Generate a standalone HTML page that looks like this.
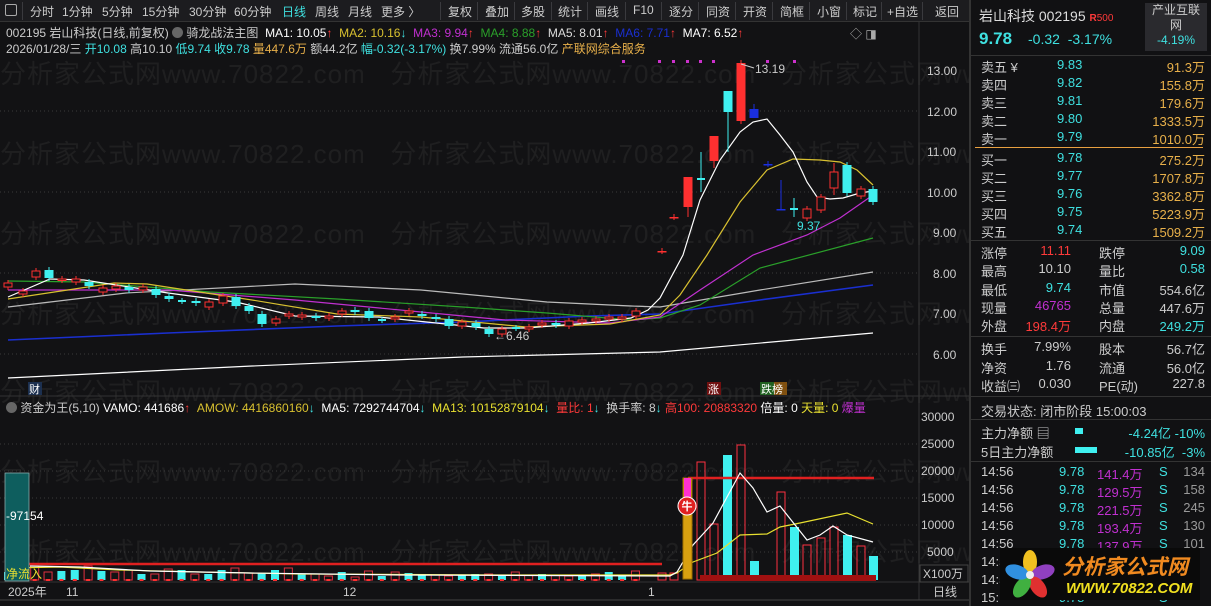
<!DOCTYPE html><html><head><meta charset="utf-8"><style>
*{margin:0;padding:0;box-sizing:border-box}
body{width:1211px;height:606px;background:#121214;font-family:"Liberation Sans","Noto Sans CJK SC",sans-serif;font-size:12px;color:#ccc;position:relative;overflow:hidden}
.a{position:absolute;white-space:nowrap}
#tb{position:absolute;left:0;top:0;width:970px;height:22px;background:#1c1c1f;border-bottom:1px solid #333}
#tb span{position:absolute;top:3px;font-size:12px;color:#ccc}
#tb i{position:absolute;top:2px;width:1px;height:18px;background:#3a3a3e}
#rp{position:absolute;left:969px;top:0;width:242px;height:606px;background:#111113;border-left:2px solid #333}
.r{position:absolute;font-size:13px;white-space:nowrap}
.c{color:#3fe0e0}.rd{color:#ff3a3a}.y{color:#e8b04a}.m{color:#c030d0}.w{color:#ccc}
.wm{position:absolute;font-size:26px;color:rgba(255,255,255,0.055);white-space:nowrap;letter-spacing:1px}
</style></head><body>
<div class="wm" style="left:0;top:54px">分析家公式网www.70822.com &nbsp; 分析家公式网www.70822.com &nbsp; 分析家公式网www.70822.com</div>
<div class="wm" style="left:0;top:134px">分析家公式网www.70822.com &nbsp; 分析家公式网www.70822.com &nbsp; 分析家公式网www.70822.com</div>
<div class="wm" style="left:0;top:214px">分析家公式网www.70822.com &nbsp; 分析家公式网www.70822.com &nbsp; 分析家公式网www.70822.com</div>
<div class="wm" style="left:0;top:294px">分析家公式网www.70822.com &nbsp; 分析家公式网www.70822.com &nbsp; 分析家公式网www.70822.com</div>
<div class="wm" style="left:0;top:372px">分析家公式网www.70822.com &nbsp; 分析家公式网www.70822.com &nbsp; 分析家公式网www.70822.com</div>
<div class="wm" style="left:0;top:452px">分析家公式网www.70822.com &nbsp; 分析家公式网www.70822.com &nbsp; 分析家公式网www.70822.com</div>
<div class="wm" style="left:0;top:532px">分析家公式网www.70822.com &nbsp; 分析家公式网www.70822.com &nbsp; 分析家公式网www.70822.com</div>

<svg id="sv" class="a" style="left:0;top:0" width="970" height="606" xmlns="http://www.w3.org/2000/svg">
<g stroke="#3a3a3a" stroke-dasharray="1,3">
<line x1="0" y1="111" x2="918" y2="111"/><line x1="0" y1="192" x2="918" y2="192"/><line x1="0" y1="273" x2="918" y2="273"/><line x1="0" y1="354" x2="918" y2="354"/>
<line x1="0" y1="444" x2="918" y2="444"/><line x1="0" y1="471" x2="918" y2="471"/><line x1="0" y1="498" x2="918" y2="498"/><line x1="0" y1="525" x2="918" y2="525"/><line x1="0" y1="552" x2="918" y2="552"/>
</g>
<line x1="919" y1="22" x2="919" y2="600" stroke="#333"/>
<line x1="0" y1="396" x2="970" y2="396" stroke="#333"/>
<line x1="0" y1="582" x2="970" y2="582" stroke="#333"/>
<line x1="0" y1="600" x2="970" y2="600" stroke="#444"/>
<g fill="none" stroke-width="1.2">
<polyline stroke="#fff" points="8,378 252,366 463,357 660,352 873,333"/>
<polyline stroke="#1a2fd0" stroke-width="1.6" points="8,340 168,333 337,326 463,322 589,316 660,314 760,300 873,285"/>
<polyline stroke="#bbb" points="8,307 126,293 295,284 421,290 547,302 631,306 660,307 760,290 873,272"/>
<polyline stroke="#2aa02a" points="8,281 84,282 210,292 337,299 463,307 547,313 631,320 660,318 700,305 760,268 873,238"/>
<polyline stroke="#c030d0" points="8,290 168,290 295,300 421,312 505,320 610,323 660,317 700,290 753,255 807,235 840,218 873,195"/>
<polyline stroke="#d8c030" points="8,299 114,283 147,284 252,300 337,314 421,317 526,327 610,324 660,315 680,295 707,255 740,202 767,170 793,159 820,160 840,162 857,170 873,185"/>
<polyline stroke="#fff" points="8,297 50,279 84,280 168,293 236,302 295,316 379,317 484,328 526,328 589,323 631,318 648,310 660,298 683,255 700,200 720,160 740,132 753,122 767,119 780,135 793,152 807,182 817,197 830,199 843,198 860,193 873,191"/>
</g>
<g id="cd"></g>
<g id="vb"></g>
<g fill="none" stroke-width="1.2">
<line x1="8" y1="564" x2="662" y2="564" stroke="#e02020" stroke-width="2.5"/>
<line x1="688" y1="478" x2="874" y2="478" stroke="#e02020" stroke-width="2.5"/>
<polyline stroke="#e8e030" points="8,568 60,567 120,570 200,572 300,574 500,575 670,575 677,573 693,562 717,553 740,535 767,534 780,527 800,523 847,513 873,524"/>
<polyline stroke="#fff" points="30,566 80,567 150,571 250,573 400,575 670,576 677,572 693,545 713,523 740,473 753,488 767,512 780,506 807,540 820,535 833,526 847,535 873,542"/>
</g>
<rect x="700" y="575" width="176" height="6" fill="#a01010"/>
<rect x="683" y="478" width="9" height="101" fill="#d8a010" stroke="#a07000"/>
<rect x="684" y="478" width="7" height="20" fill="#ff30d0"/>
<circle cx="687" cy="506" r="9" fill="#e02020" stroke="#fff" stroke-width="1"/>
<text x="687" y="510" fill="#fff" font-size="11" text-anchor="middle" font-weight="bold">牛</text>
<rect x="5" y="473" width="24" height="108" fill="#0e5e5e" stroke="#8aa" stroke-width="0.8"/>
<text x="6" y="520" fill="#fff" font-size="12">-97154</text>
<text x="6" y="578" fill="#e8e030" font-size="12">净流入</text>
<g fill="#cc30cc"><rect x="622" y="60" width="3" height="3"/><rect x="658" y="60" width="3" height="3"/><rect x="672" y="60" width="3" height="3"/><rect x="686" y="60" width="3" height="3"/><rect x="699" y="60" width="3" height="3"/><rect x="712" y="60" width="3" height="3"/><rect x="766" y="60" width="3" height="3"/><rect x="793" y="60" width="3" height="3"/></g>
<text x="755" y="73" fill="#ccc" font-size="12">13.19</text>
<path d="M741 64 L754 68" stroke="#ccc" fill="none"/>
<text x="797" y="230" fill="#3fe0e0" font-size="12">9.37</text>
<text x="494" y="340" fill="#ccc" font-size="12">←6.46</text>
<rect x="28" y="382" width="14" height="13" fill="#1c3050"/><text x="29" y="393" fill="#fff" font-size="11">财</text>
<rect x="707" y="382" width="14" height="13" fill="#701010"/><text x="708" y="393" fill="#fff" font-size="11">涨</text>
<rect x="760" y="382" width="14" height="13" fill="#206020"/><rect x="774" y="382" width="13" height="13" fill="#805010"/><text x="761" y="393" fill="#fff" font-size="11">跌榜</text>
<g fill="#ccc" font-size="12">
<text x="927" y="75">13.00</text><text x="927" y="116">12.00</text><text x="927" y="156">11.00</text><text x="927" y="197">10.00</text><text x="933" y="237">9.00</text><text x="933" y="278">8.00</text><text x="933" y="318">7.00</text><text x="933" y="359">6.00</text>
<text x="921" y="421">30000</text><text x="921" y="448">25000</text><text x="921" y="475">20000</text><text x="921" y="502">15000</text><text x="921" y="529">10000</text><text x="927" y="556">5000</text>
<text x="923" y="578">X100万</text><text x="933" y="596">日线</text>
<text x="8" y="596">2025年</text><text x="66" y="596">11</text><text x="343" y="596">12</text><text x="648" y="596">1</text>
</g>
<rect x="920" y="565" width="48" height="17" fill="none" stroke="#444"/>
</svg>

<div id="tb">
<span style="left:5px;top:4px;width:12px;height:12px;border:1px solid #aaa;border-radius:2px"></span>
<i style="left:22px"></i>
<span style="left:30px">分时</span><span style="left:62px">1分钟</span><span style="left:102px">5分钟</span><span style="left:142px">15分钟</span><span style="left:189px">30分钟</span><span style="left:234px">60分钟</span><span style="left:282px;color:#3fe0e0">日线</span><span style="left:315px">周线</span><span style="left:348px">月线</span><span style="left:381px">更多 〉</span>
<i style="left:440px"></i><span style="left:448px">复权</span><i style="left:477px"></i><span style="left:485px">叠加</span><i style="left:514px"></i><span style="left:521px">多股</span><i style="left:551px"></i><span style="left:558px">统计</span><i style="left:587px"></i><span style="left:595px">画线</span><i style="left:625px"></i><span style="left:633px">F10</span><i style="left:661px"></i><span style="left:669px">逐分</span><i style="left:698px"></i><span style="left:706px">同资</span><i style="left:735px"></i><span style="left:743px">开资</span><i style="left:772px"></i><span style="left:780px">简框</span><i style="left:809px"></i><span style="left:817px">小窗</span><i style="left:846px"></i><span style="left:853px">标记</span><i style="left:881px"></i><span style="left:887px">+自选</span><i style="left:922px"></i><span style="left:935px">返回</span>
</div>

<div class="a" style="left:6px;top:24px;font-size:12px">002195 岩山科技(日线,前复权) <span style="display:inline-block;width:11px;height:11px;border-radius:50%;background:#666;vertical-align:-1px"></span> 骑龙战法主图 &nbsp;<span style="color:#fff">MA1: 10.05</span><span class="rd">↑</span> &nbsp;<span style="color:#d8c030">MA2: 10.16</span><span class="c">↓</span> &nbsp;<span class="m">MA3: 9.94</span><span class="rd">↑</span> &nbsp;<span style="color:#2aa02a">MA4: 8.88</span><span class="rd">↑</span> &nbsp;<span style="color:#ddd">MA5: 8.01</span><span class="rd">↑</span> &nbsp;<span style="color:#1a2fd0">MA6: 7.71</span><span class="rd">↑</span> &nbsp;<span style="color:#fff">MA7: 6.52</span><span class="rd">↑</span></div>
<div class="a" style="left:850px;top:25px;color:#aaa">◇ ◨</div>
<div class="a" style="left:6px;top:40px;font-size:12px">2026/01/28/三 <span class="c">开10.08</span> 高10.10 <span class="c">低9.74 收9.78</span> <span class="y">量447.6万</span> 额44.2亿 <span class="c">幅-0.32(-3.17%)</span> 换7.99% 流通56.0亿 <span class="y">产联网综合服务</span></div>
<div class="a" style="left:6px;top:399px;font-size:12px"><span style="display:inline-block;width:11px;height:11px;border-radius:50%;background:#666;vertical-align:-1px"></span> 资金为王(5,10) <span style="color:#fff">VAMO: 441686</span><span class="rd">↑</span> &nbsp;<span style="color:#d8c030">AMOW: 4416860160</span><span class="c">↓</span> &nbsp;<span style="color:#fff">MA5: 7292744704</span><span class="c">↓</span> &nbsp;<span style="color:#e8e030">MA13: 10152879104</span><span class="c">↓</span> &nbsp;<span class="rd">量比: 1</span><span class="c">↓</span> &nbsp;换手率: 8<span class="c">↓</span> <span class="rd">高100: 20883320</span> <span style="color:#fff">倍量: 0</span> <span style="color:#e8e030">天量: 0</span> <span class="m">爆量</span></div>

<div id="rp">
<div class="r" style="left:8px;top:6px;font-size:14px;color:#ddd">岩山科技 002195 <span style="color:#ff3a3a;font-size:10px;font-weight:bold">R</span><span style="color:#ff3a3a;font-size:10px">500</span></div>
<div class="r" style="left:8px;top:29px;font-size:17px;font-weight:bold;color:#3fe0e0">9.78</div>
<div class="r c" style="left:57px;top:31px;font-size:14px">-0.32 &nbsp;-3.17%</div>
<div class="a" style="left:174px;top:3px;width:62px;height:48px;background:#2a2a2e;text-align:center;font-size:12px;line-height:15px;color:#ccc">产业互联<br>网<br><span class="c">-4.19%</span></div>
<div style="position:absolute;left:0;top:55px;width:242px;height:1px;background:#333"></div>
<div id="rows"></div>
</div>
<div class="a" style="left:1000px;top:548px;width:200px;height:52px;background:#0a0a0a"></div>
<svg class="a" style="left:1002px;top:548px" width="56" height="54"><g transform="translate(28,27)"><ellipse cx="0" cy="-13" rx="7" ry="12" fill="#f0c020"/><ellipse cx="13" cy="-3" rx="7" ry="12" fill="#9040c0" transform="rotate(72 13 -3)"/><ellipse cx="8" cy="12" rx="7" ry="12" fill="#e03030" transform="rotate(144 8 12)"/><ellipse cx="-8" cy="12" rx="7" ry="12" fill="#40b040" transform="rotate(216 -8 12)"/><ellipse cx="-13" cy="-3" rx="7" ry="12" fill="#3090e0" transform="rotate(288 -13 -3)"/><circle r="4" fill="#eee"/></g></svg>
<div class="a" style="left:1062px;top:551px;font-size:21px;font-weight:bold;color:#f08a20;font-style:italic">分析家公式网</div>
<div class="a" style="left:1066px;top:580px;font-size:15px;font-weight:bold;color:#f0e020;font-style:italic">WWW.70822.COM</div>

<script>
var S='http://www.w3.org/2000/svg';
function el(p,t,a){var e=document.createElementNS(S,t);for(var k in a)e.setAttribute(k,a[k]);p.appendChild(e);return e;}
var cd=document.getElementById('cd');
// [x, top, bottom, wickTop, wickBot, type] type: r=red hollow, R=red solid, c=cyan solid, b=blue, x=cross
var L=[[8,283,287,'r'],[23,291,294,'r'],[36,271,277,'r'],[49,270,278,'c'],[62,279,280,'r'],[76,279,282,'r'],[89,282,286,'c'],[103,288,292,'r'],[116,286,289,'r'],[129,287,290,'c'],[143,287,290,'r'],[156,289,295,'c'],[169,296,299,'c'],[182,301,301,'x'],[196,301,303,'c'],[209,302,307,'r'],[223,296,303,'r'],[236,297,306,'c'],[249,306,311,'c'],[262,314,324,'c'],[276,319,323,'r'],[289,314,316,'r'],[302,315,317,'r'],[316,316,318,'c'],[329,316,318,'r'],[342,311,314,'r'],[355,310,312,'c'],[369,311,318,'c'],[382,320,320,'x'],[395,317,319,'r'],[409,311,313,'r'],[422,314,316,'c'],[436,317,319,'c'],[449,319,326,'c'],[462,322,326,'r'],[476,323,327,'c'],[489,329,334,'c'],[502,329,334,'r'],[516,328,328,'x'],[529,327,329,'r'],[542,323,325,'r'],[556,323,325,'c'],[569,321,326,'r'],[582,320,322,'r'],[596,319,321,'r'],[609,317,319,'r'],[622,317,319,'r'],[636,311,316,'r'],
[662,251,251,'R'],[674,217,217,'R'],[688,177,207,'R',177,217],[701,179,179,'x',152,192],[714,136,161,'R',136,168],[728,91,112,'c',91,152],[741,63,121,'R'],[754,109,118,'b',104,118],[768,164,164,'b'],[781,209,209,'b',180,209],[794,209,209,'x',198,217],[807,209,218,'r'],[821,197,210,'r'],[834,172,188,'r',163,195],[847,165,193,'c'],[861,189,196,'r',186,199],[873,189,202,'c']];
L.forEach(function(d){var x=d[0],t=d[1],b=d[2],ty=d[3],wt=d[4]||t-3,wb=d[5]||b+3;
var col=ty=='c'?'#3ff0f0':ty=='b'?'#1a2fe0':ty=='x'?'#3ff0f0':'#ff3030';
el(cd,'line',{x1:x,y1:wt,x2:x,y2:wb,stroke:col});
if(ty=='x'){el(cd,'line',{x1:x-4,y1:t,x2:x+4,y2:t,stroke:col,'stroke-width':2});return;}
var h=Math.max(b-t,1.5);
if(ty=='r')el(cd,'rect',{x:x-4,y:t,width:8,height:h,fill:'#121214',stroke:col});
else el(cd,'rect',{x:x-4.5,y:t,width:9,height:h,fill:col});});
var vb=document.getElementById('vb');
var tops=[572,554,566,572,571,570,566,571,572,570,574,574,569,570,574,574,570,568,573,573,570,568,574,574,576,572,577,571,576,572,573,574,575,576,575,574,574,575,572,575,574,575,576,576,574,572,575,571];
for(var i=0;i<48;i++){var x=8+i*13.35,t=tops[i];var cy=(i%3==1||i%5==0);
if(cy)el(vb,'rect',{x:x-4,y:t,width:8,height:580-t,fill:'#3ff0f0'});else el(vb,'rect',{x:x-4,y:t,width:8,height:580-t,fill:'none',stroke:'#e03040'});
el(vb,'rect',{x:x-2,y:579,width:4,height:2,fill:'#ff3030'});}
var R=[[701,462,'r'],[714,524,'r'],[727,455,'c'],[741,445,'r'],[754,561,'c'],[767,577,'c'],[781,492,'r'],[794,527,'c'],[807,545,'r'],[821,538,'r'],[834,527,'r'],[847,535,'c'],[861,546,'r'],[873,556,'c'],[662,573,'r'],[674,573,'r']];
R.forEach(function(d){if(d[2]=='c')el(vb,'rect',{x:d[0]-4,y:d[1],width:9,height:580-d[1],fill:'#3ff0f0'});else el(vb,'rect',{x:d[0]-4,y:d[1],width:8,height:580-d[1],fill:'none',stroke:'#ff3040'});});
// right panel rows
var rows=document.getElementById('rows'),h='';
function row(y,a,b,bc,c,d,dc){h+='<div class="r" style="left:10px;top:'+y+'px;color:#ccc">'+a+'</div><div class="r '+bc+'" style="right:'+(c?140:155)+'px;top:'+y+'px">'+b+'</div>';if(c)h+='<div class="r" style="left:128px;top:'+y+'px;color:#ccc">'+c+'</div>';h+='<div class="r '+dc+'" style="right:6px;top:'+y+'px">'+d+'</div>';}
function ob(y,a,p,v){h+='<div class="r w" style="left:10px;top:'+y+'px">'+a+'</div><div class="r c" style="left:86px;top:'+y+'px">'+p+'</div><div class="r y" style="right:6px;top:'+y+'px">'+v+'</div>';}
ob(57,'卖五 ¥','9.83','91.3万');ob(75,'卖四','9.82','155.8万');ob(93,'卖三','9.81','179.6万');ob(111,'卖二','9.80','1333.5万');ob(129,'卖一','9.79','1010.0万');
h+='<div style="position:absolute;left:4px;top:147px;width:228px;height:1px;background:#e8a040"></div>';
ob(150,'买一','9.78','275.2万');ob(168,'买二','9.77','1707.8万');ob(186,'买三','9.76','3362.8万');ob(204,'买四','9.75','5223.9万');ob(222,'买五','9.74','1509.2万');
h+='<div style="position:absolute;left:0;top:240px;width:242px;height:1px;background:#333"></div>';
row(243,'涨停','11.11','rd','跌停','9.09','c');row(261,'最高','10.10','w','量比','0.58','c');row(280,'最低','9.74','c','市值','554.6亿','w');row(298,'现量','46765','m','总量','447.6万','w');row(316,'外盘','198.4万','rd','内盘','249.2万','c');
h+='<div style="position:absolute;left:0;top:336px;width:242px;height:1px;background:#333"></div>';
row(339,'换手','7.99%','w','股本','56.7亿','w');row(358,'净资','1.76','w','流通','56.0亿','w');row(376,'收益㈢','0.030','w','PE(动)','227.8','w');
h+='<div style="position:absolute;left:0;top:396px;width:242px;height:1px;background:#333"></div>';
h+='<div class="r w" style="left:10px;top:401px">交易状态: 闭市阶段 15:00:03</div>';
h+='<div style="position:absolute;left:0;top:419px;width:242px;height:1px;background:#333"></div>';
h+='<div class="r w" style="left:10px;top:423px">主力净额 ▤</div><div style="position:absolute;left:104px;top:428px;width:8px;height:6px;background:#3ff0f0"></div><div class="r c" style="right:6px;top:423px">-4.24亿 -10%</div>';
h+='<div class="r w" style="left:10px;top:442px">5日主力净额</div><div style="position:absolute;left:104px;top:447px;width:22px;height:6px;background:#3ff0f0"></div><div class="r c" style="right:6px;top:442px">-10.85亿 &nbsp;-3%</div>';
h+='<div style="position:absolute;left:0;top:461px;width:242px;height:1px;background:#333"></div>';
var tk=[['141.4万','134'],['129.5万','158'],['221.5万','245'],['193.4万','130'],['137.9万','101'],['',''],['',''],['','']];
var tm=['14:56','14:56','14:56','14:56','14:56','14:5','14:5','15:'];
for(var j=0;j<8;j++){var y=464+j*18;h+='<div class="r w" style="left:10px;top:'+y+'px">'+tm[j]+'</div><div class="r c" style="left:88px;top:'+y+'px">9.78</div><div class="r m" style="left:126px;top:'+y+'px">'+tk[j][0]+'</div><div class="r c" style="left:188px;top:'+y+'px">S</div><div class="r" style="right:6px;top:'+y+'px;color:#999">'+tk[j][1]+'</div>';}
rows.innerHTML=h;
</script>
</body></html>
